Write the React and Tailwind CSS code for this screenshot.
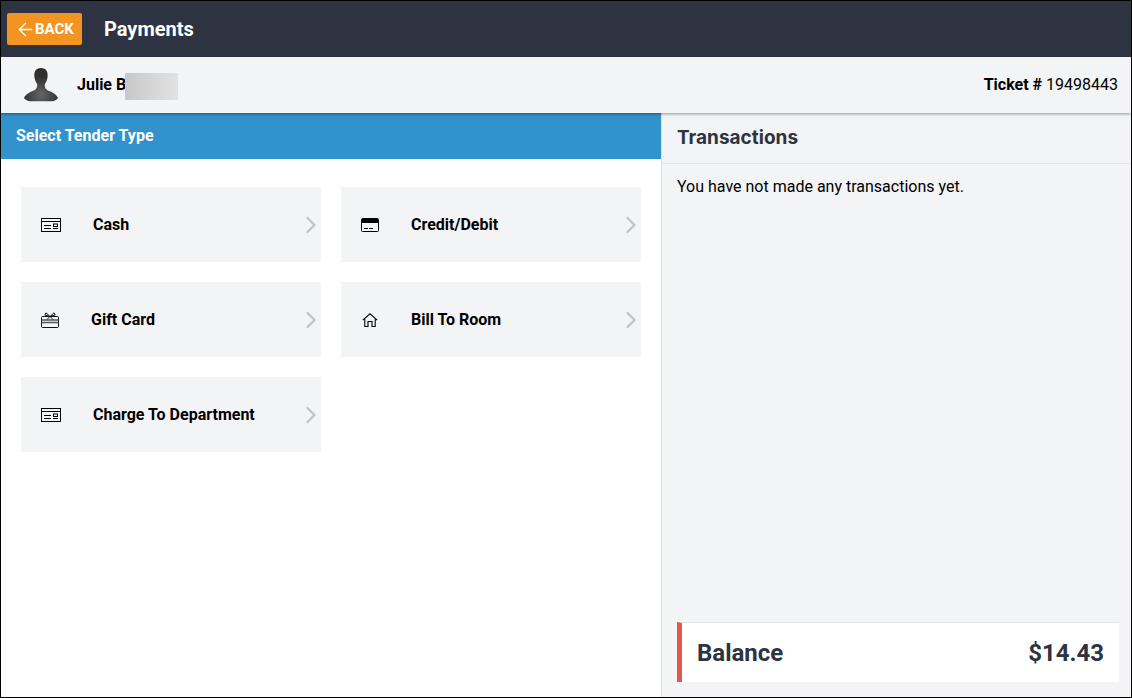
import { ArrowLeft, ChevronRight } from 'lucide-react';

const CashIcon = () => (
  <svg width="20" height="14" viewBox="0 0 20 14" fill="none" stroke="#000" strokeWidth="1">
    <rect x="0.5" y="0.5" width="19" height="13" />
    <path d="M0.5 3.5H19.5" />
    <path d="M3 7.5H10M3 10.5H10" />
    <rect x="12.5" y="6" width="4" height="2.5" />
    <path d="M12 10.5H17" />
  </svg>
);

const CardIcon = () => (
  <svg width="18" height="14" viewBox="0 0 18 14" fill="none">
    <rect x="0.5" y="0.5" width="17" height="13" rx="1" stroke="#000" />
    <rect x="1" y="1" width="16" height="4" fill="#000" />
    <path d="M3 10.5H7M8 10.5H12" stroke="#000" />
  </svg>
);

const GiftIcon = () => (
  <svg width="18" height="16" viewBox="0 0 18 16" fill="none" stroke="#111" strokeWidth="1">
    <rect x="0.5" y="4.5" width="17" height="11" rx="1" />
    <path d="M0.5 8H17.5M0.5 10.5H17.5" stroke="#555" strokeWidth="1.5" />
    <path d="M9 4.5L5 0.8L3.8 3L9 4.5L14.2 3L13 0.8L9 4.5M6 7.5L9 4.5L12 7.5" />
  </svg>
);

const HomeIcon = () => (
  <svg width="16" height="14" viewBox="0 0 16 14" fill="none" stroke="#000" strokeWidth="1.1">
    <path d="M0.8 7.2L8 0.8L15.2 7.2" />
    <path d="M2.8 6V13.5H6V8.5H10V13.5H13.2V6" />
  </svg>
);

const Avatar = () => (
  <svg width="36" height="36" viewBox="0 0 36 36">
    <defs>
      <radialGradient id="bust" cx="50%" cy="80%" r="55%">
        <stop offset="0%" stopColor="#666" />
        <stop offset="100%" stopColor="#2f2f2f" />
      </radialGradient>
    </defs>
    <path
      fill="url(#bust)"
      d="M18 1C12.5 1 11 5 11.4 9.5C11.7 13 13 15.5 14.2 17C14.4 19 14 21 12.5 22.5C10 24.5 3 25.5 1 31C2 33 5 34 7 34.3H29C31 34 34 33 35 31C33 25.5 26 24.5 23.5 22.5C22 21 21.6 19 21.8 17C23 15.5 24.3 13 24.6 9.5C25 5 23.5 1 18 1Z"
    />
  </svg>
);

const tenders = [
  { label: 'Cash', icon: <CashIcon />, iconBox: 'w-[72px] pl-5' },
  { label: 'Credit/Debit', icon: <CardIcon />, iconBox: 'w-[70px] pl-5' },
  { label: 'Gift Card', icon: <GiftIcon />, iconBox: 'w-[70px] pl-5' },
  { label: 'Bill To Room', icon: <HomeIcon />, iconBox: 'w-[70px] pl-[21px]' },
  { label: 'Charge To Department', icon: <CashIcon />, iconBox: 'w-[72px] pl-5' },
];

export default function App() {
  return (
    <div className="w-[1132px] h-[698px] border border-black flex flex-col overflow-hidden bg-white font-['Roboto',sans-serif]">
      <header className="h-14 shrink-0 bg-[#2d3340] flex items-center pl-1.5">
        <button className="w-[75px] h-8 bg-[#f39421] rounded-[2px] flex items-center pl-2 text-white text-[15px] font-bold">
          <ArrowLeft size={21} strokeWidth={1.6} className="shrink-0 -mr-px" />
          BACK
        </button>
        <h1 className="ml-[22px] text-xl font-bold text-white">Payments</h1>
      </header>

      <div className="h-14 shrink-0 bg-[#f3f4f6] flex items-center justify-between pl-[22px] pr-[13px] relative z-10 shadow-[0_1px_3px_rgba(0,0,0,0.4)]">
        <div className="flex items-center">
          <Avatar />
          <div className="relative ml-[18px] text-base font-bold text-black">
            <span>Julie B</span>
            <div className="absolute left-[48px] top-0 w-[53px] h-[27px] bg-gradient-to-r from-[#c8c8c8] to-[#e2e2e2]" />
          </div>
        </div>
        <div className="text-base text-black">
          <span className="font-bold">Ticket # </span>19498443
        </div>
      </div>

      <div className="flex-1 flex min-h-0">
        <section className="w-[660px] shrink-0">
          <div className="h-[46px] bg-[#3292cc] flex items-center pl-[15px] text-white text-base font-bold">
            Select Tender Type
          </div>
          <div className="grid grid-cols-[300px_300px] gap-5 pl-5 pt-7">
            {tenders.map((t) => (
              <button key={t.label} className="h-[75px] bg-[#f3f4f6] flex items-center text-left">
                <span className={`${t.iconBox} shrink-0 flex items-center`}>{t.icon}</span>
                <span className="flex-1 text-base font-bold text-black">{t.label}</span>
                <ChevronRight size={28} strokeWidth={2} className="text-[#c4c4c4] mr-[-4px]" />
              </button>
            ))}
          </div>
        </section>

        <aside className="flex-1 bg-[#f3f4f6] border-l border-[#dfe1e5] flex flex-col">
          <div className="h-[51px] shrink-0 border-b border-[#e2e4e8] flex items-center pl-[15px]">
            <h2 className="text-[19px] font-bold text-[#2d3340] font-['Inter',sans-serif]">Transactions</h2>
          </div>
          <p className="pl-[15px] pt-[11px] text-base text-black">You have not made any transactions yet.</p>
          <div className="mt-auto mb-[15px] ml-[15px] mr-3 h-[60px] bg-white border-l-[5px] border-[#e05a4b] border-t border-t-[#e4e4e4] flex items-center justify-between pl-[15px] pr-[15px]">
            <span className="text-2xl font-bold text-[#2d3340]">Balance</span>
            <span className="text-2xl font-bold text-[#2d3340]">$14.43</span>
          </div>
        </aside>
      </div>
    </div>
  );
}
